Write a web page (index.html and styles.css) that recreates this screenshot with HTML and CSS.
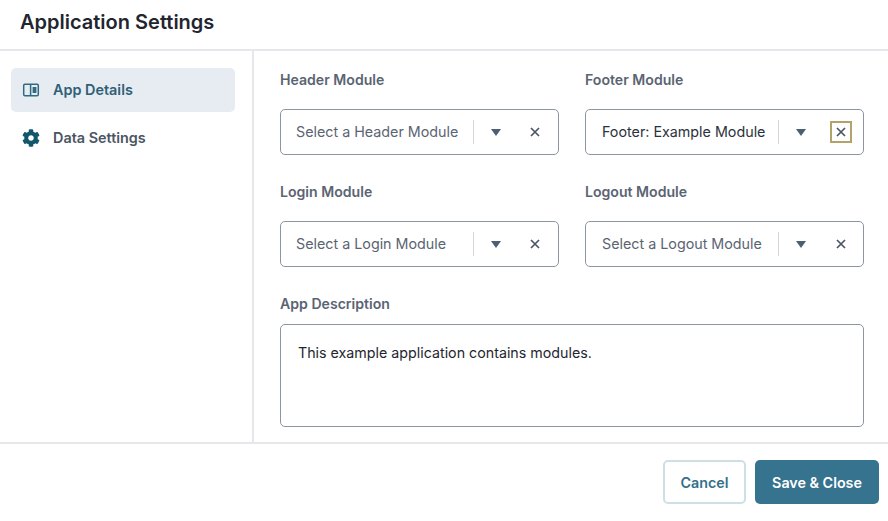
FILE: index.html
```html
<!DOCTYPE html>
<html lang="en">
<head>
    <meta charset="UTF-8">
    <meta name="viewport" content="width=device-width, initial-scale=1.0">
    <title>Application Settings</title>
    <link rel="stylesheet" href="styles.css">
</head>
<body>
    <div class="dialog">
        <header class="header">
            <h1>Application Settings</h1>
        </header>

        <div class="main">
            <nav class="sidebar">
                <a class="nav-item active" href="#">
                    <svg class="nav-icon" viewBox="0 0 18 18" width="18" height="18">
                        <rect x="1.7" y="3.2" width="14.6" height="11.6" rx="1.2" fill="none" stroke="#2f6b82" stroke-width="1.5"/>
                        <line x1="8.6" y1="3.2" x2="8.6" y2="14.8" stroke="#2f6b82" stroke-width="1.5"/>
                        <rect x="10.6" y="6" width="3.8" height="6" fill="#2f6b82"/>
                    </svg>
                    <span>App Details</span>
                </a>
                <a class="nav-item" href="#">
                    <svg class="nav-icon" viewBox="0 0 512 512" width="18" height="18">
                        <path fill="#11566b" d="M487.4 315.7l-42.6-24.6c4.3-23.2 4.3-47 0-70.2l42.6-24.6c4.9-2.8 7.1-8.6 5.5-14-11.1-35.6-30-67.8-54.7-94.6-3.8-4.1-10-5.1-14.8-2.3L380.8 110c-17.9-15.4-38.5-27.3-60.8-35.1V25.8c0-5.6-3.9-10.5-9.4-11.7-36.7-8.2-74.3-7.8-109.2 0-5.5 1.2-9.4 6.1-9.4 11.7V75c-22.2 7.9-42.8 19.8-60.8 35.1L88.7 85.5c-4.9-2.8-11-1.9-14.8 2.3-24.7 26.7-43.6 58.9-54.7 94.6-1.7 5.4.6 11.2 5.5 14L67.3 221c-4.3 23.2-4.3 47 0 70.2l-42.6 24.6c-4.9 2.8-7.1 8.6-5.5 14 11.1 35.6 30 67.8 54.7 94.6 3.8 4.1 10 5.1 14.8 2.3l42.6-24.6c17.9 15.4 38.5 27.3 60.8 35.1v49.2c0 5.6 3.9 10.5 9.4 11.7 36.7 8.2 74.3 7.8 109.2 0 5.5-1.2 9.4-6.1 9.4-11.7v-49.2c22.2-7.9 42.8-19.8 60.8-35.1l42.6 24.6c4.9 2.8 11 1.9 14.8-2.3 24.7-26.7 43.6-58.9 54.7-94.6 1.5-5.5-.7-11.3-5.6-14.1zM256 336c-44.1 0-80-35.9-80-80s35.9-80 80-80 80 35.9 80 80-35.9 80-80 80z"/>
                    </svg>
                    <span>Data Settings</span>
                </a>
            </nav>

            <div class="content">
                <div class="field-grid">
                    <div class="field">
                        <label>Header Module</label>
                        <div class="select">
                            <span class="select-text placeholder">Select a Header Module</span>
                            <span class="select-sep"></span>
                            <span class="caret"></span>
                            <span class="clear">
                                <svg viewBox="0 0 10 10" width="10" height="10"><path d="M1 1l8 8M9 1l-8 8" stroke="#4b5563" stroke-width="1.7"/></svg>
                            </span>
                        </div>
                    </div>
                    <div class="field">
                        <label>Footer Module</label>
                        <div class="select select-right">
                            <span class="select-text">Footer: Example Module</span>
                            <span class="select-sep"></span>
                            <span class="caret"></span>
                            <span class="clear focused">
                                <svg viewBox="0 0 10 10" width="10" height="10"><path d="M1 1l8 8M9 1l-8 8" stroke="#4b5563" stroke-width="1.7"/></svg>
                            </span>
                        </div>
                    </div>
                    <div class="field">
                        <label>Login Module</label>
                        <div class="select">
                            <span class="select-text placeholder">Select a Login Module</span>
                            <span class="select-sep"></span>
                            <span class="caret"></span>
                            <span class="clear">
                                <svg viewBox="0 0 10 10" width="10" height="10"><path d="M1 1l8 8M9 1l-8 8" stroke="#4b5563" stroke-width="1.7"/></svg>
                            </span>
                        </div>
                    </div>
                    <div class="field">
                        <label>Logout Module</label>
                        <div class="select select-right">
                            <span class="select-text placeholder">Select a Logout Module</span>
                            <span class="select-sep"></span>
                            <span class="caret"></span>
                            <span class="clear">
                                <svg viewBox="0 0 10 10" width="10" height="10"><path d="M1 1l8 8M9 1l-8 8" stroke="#4b5563" stroke-width="1.7"/></svg>
                            </span>
                        </div>
                    </div>
                </div>

                <div class="field description">
                    <label>App Description</label>
                    <div class="textarea">This example application contains modules.</div>
                </div>
            </div>
        </div>

        <footer class="footer">
            <button class="button secondary">Cancel</button>
            <button class="button primary">Save &amp; Close</button>
        </footer>
    </div>
</body>
</html>
```

FILE: styles.css
```css
* {
    margin: 0;
    padding: 0;
    box-sizing: border-box;
}

body {
    font-family: Inter, "Liberation Sans", sans-serif;
    background-color: #ffffff;
    color: #1f2937;
}

.dialog {
    width: 888px;
    height: 521px;
    display: flex;
    flex-direction: column;
    overflow: hidden;
}

/* Header */
.header {
    height: 51px;
    padding: 9px 20px 0;
    border-bottom: 2px solid #e5e7eb;
}

.header h1 {
    font-size: 20px;
    line-height: 26px;
    font-weight: 600;
    color: #1f2630;
}

.main {
    height: 391px;
    display: flex;
}

/* Sidebar */
.sidebar {
    width: 254px;
    padding: 17px 17px 0 11px;
    border-right: 2px solid #e5e7eb;
    display: flex;
    flex-direction: column;
    gap: 4px;
}

.nav-item {
    height: 44px;
    padding-left: 11px;
    display: flex;
    align-items: center;
    gap: 13px;
    border-radius: 5px;
    font-size: 14.4px;
    font-weight: 600;
    color: #4b5563;
    text-decoration: none;
}

.nav-item span {
    margin-bottom: 2px;
}

.nav-item.active {
    background-color: #e6ecf2;
    color: #2f5f76;
}

.nav-icon {
    flex-shrink: 0;
    margin-bottom: 1px;
}

/* Form */
.content {
    flex: 1;
    padding: 20px 24px 0 26px;
}

.field-grid {
    display: grid;
    grid-template-columns: 279px 279px;
    column-gap: 26px;
    row-gap: 28px;
}

.field label {
    display: block;
    height: 18px;
    margin-bottom: 20px;
    font-size: 14.1px;
    line-height: 18px;
    font-weight: 600;
    color: #5b6472;
}

.select {
    height: 46px;
    padding-left: 15px;
    display: flex;
    align-items: center;
    background-color: #fff;
    border: 1px solid #8d95a1;
    border-radius: 5px;
}

.select-text {
    width: 177px;
    margin-bottom: 2px;
    font-size: 14.3px;
    white-space: nowrap;
    color: #2b323c;
}

.select-text.placeholder {
    color: #5b6472;
}

.select-sep {
    width: 1px;
    height: 24px;
    background-color: #d4d8dd;
}

.caret {
    width: 0;
    height: 0;
    margin-left: 17px;
    border-left: 5px solid transparent;
    border-right: 5px solid transparent;
    border-top: 7px solid #4b5f73;
}

.clear {
    width: 22px;
    height: 22px;
    margin-left: 23px;
    display: flex;
    align-items: center;
    justify-content: center;
    border: 2px solid transparent;
}

.clear.focused {
    border-color: #b3a36b;
}

/* right column sits half a pixel over */
.select-right {
    padding-left: 16px;
}

.select-right .select-text {
    width: 176px;
}

.select-right .clear {
    margin-left: 24px;
}

.description {
    margin-top: 28px;
}

.description label {
    margin-bottom: 11px;
}

.textarea {
    height: 103px;
    padding: 19px 17px;
    font-size: 14.25px;
    line-height: 18px;
    color: #1f2630;
    border: 1px solid #8d95a1;
    border-radius: 5px;
}

/* Footer */
.footer {
    flex: 1;
    padding-top: 16px;
    padding-right: 9px;
    display: flex;
    justify-content: flex-end;
    align-items: flex-start;
    gap: 9px;
    border-top: 2px solid #e5e7eb;
}

.button {
    height: 44px;
    font-family: inherit;
    font-size: 14.3px;
    font-weight: 600;
    border-radius: 5px;
    cursor: pointer;
}

.secondary {
    width: 83px;
    background-color: #fff;
    color: #35708a;
    border: 2px solid #cfdfe6;
}

.primary {
    width: 124px;
    background-color: #35738e;
    color: #fff;
    border: none;
}
```
